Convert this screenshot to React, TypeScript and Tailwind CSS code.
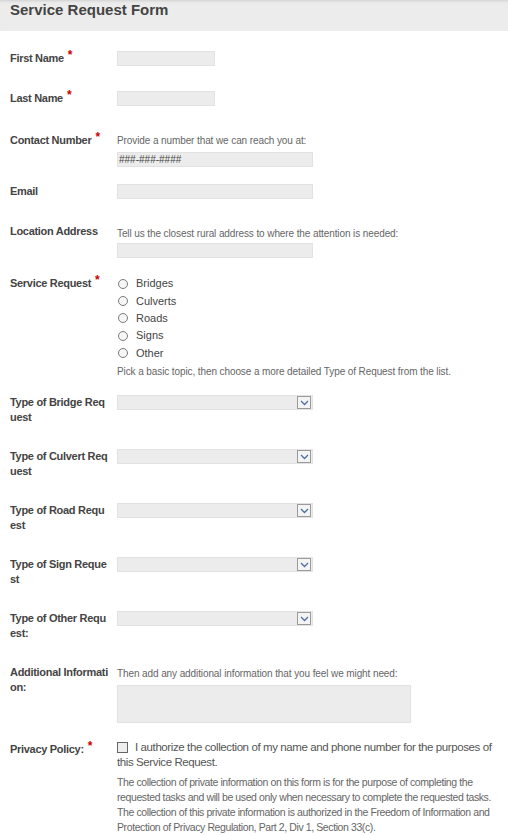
import React from 'react';

const font = { fontFamily: '"Liberation Sans", Arial, sans-serif' };

function Req() {
  return <span className="relative -top-[3px] ml-[4px] text-[12px] text-[#cc0000]">*</span>;
}

function Label({ children, className = '' }: { children: React.ReactNode; className?: string }) {
  return (
    <div className={`w-[107px] shrink-0 text-[11px] font-bold leading-[15px] tracking-[-0.3px] text-[#444] ${className}`}>
      {children}
    </div>
  );
}

function Box({ w = 'w-[98px]' }: { w?: string }) {
  return <div className={`${w} h-[15px] bg-[#ececec] border border-[#e2e2e2]`} />;
}

function Help({ children, className = '' }: { children: React.ReactNode; className?: string }) {
  return <div className={`text-[10px] leading-[13px] tracking-[-0.1px] text-[#666] ${className}`}>{children}</div>;
}

function Select() {
  return (
    <div className="w-[196px] h-[15px] bg-[#ececec] border border-[#e2e2e2] flex justify-end items-center pr-[1px]">
      <div className="w-[14px] h-[13px] border border-[#9a9a9a] bg-[#f4f4f4] flex items-center justify-center">
        <svg width="9" height="6" viewBox="0 0 9 6">
          <path d="M1 1l3.5 3.5L8 1" fill="none" stroke="#4a6fa5" strokeWidth="1.3" />
        </svg>
      </div>
    </div>
  );
}

const topics = ['Bridges', 'Culverts', 'Roads', 'Signs', 'Other'];

const selects = [
  ['Type of Bridge Req', 'uest'],
  ['Type of Culvert Req', 'uest'],
  ['Type of Road Requ', 'est'],
  ['Type of Sign Reque', 'st'],
  ['Type of Other Requ', 'est:'],
];

export default function App() {
  return (
    <div className="w-[508px] min-h-[835px] bg-white" style={font}>
      {/* Header */}
      <div className="h-[31px] bg-[#ececec] shadow-[inset_0_3px_3px_-2px_rgba(0,0,0,0.12)] px-[10px] pt-[1px]">
        <h1 className="text-[15px] font-bold leading-[18px] text-[#444]">Service Request Form</h1>
      </div>

      <div className="px-[10px]">
        {/* First / Last name */}
        <div className="flex items-center mt-[20px]">
          <Label>First Name<Req /></Label>
          <Box />
        </div>
        <div className="flex items-center mt-[25px]">
          <Label>Last Name<Req /></Label>
          <Box />
        </div>

        {/* Contact number */}
        <div className="flex items-start mt-[27px]">
          <Label>Contact Number<Req /></Label>
          <div>
            <Help className="pt-[1px]">Provide a number that we can reach you at:</Help>
            <div className="mt-[5px] w-[196px] h-[15px] bg-[#ececec] border border-[#e2e2e2] text-[10px] leading-[13px] text-[#444] pl-[1px]">
              ###-###-####
            </div>
          </div>
        </div>

        {/* Email */}
        <div className="flex items-center mt-[17px]">
          <Label>Email</Label>
          <Box w="w-[196px]" />
        </div>

        {/* Location */}
        <div className="flex items-start mt-[25px]">
          <Label>Location Address</Label>
          <div>
            <Help className="pt-[3px]">Tell us the closest rural address to where the attention is needed:</Help>
            <div className="mt-[3px] w-[196px] h-[15px] bg-[#ececec] border border-[#e2e2e2]" />
          </div>
        </div>

        {/* Service request */}
        <div className="flex items-start mt-[17px]">
          <Label className="pt-[1px]">Service Request<Req /></Label>
          <div>
            {topics.map((t) => (
              <label key={t} className="flex items-center h-[17.3px] text-[11px] text-[#444]">
                <span className="w-[10px] h-[10px] rounded-full border border-[#7a7a7a] bg-[#f6f6f6] ml-[1px] mr-[8px]" />
                {t}
              </label>
            ))}
            <Help className="mt-[4px]">Pick a basic topic, then choose a more detailed Type of Request from the list.</Help>
          </div>
        </div>

        {/* Type selects */}
        {selects.map(([a, b], i) => (
          <div key={a} className={`flex items-start ${i === 0 ? 'mt-[17px]' : 'mt-[24px]'}`}>
            <Label>
              {a}
              <br />
              {b}
            </Label>
            <Select />
          </div>
        ))}

        {/* Additional info */}
        <div className="flex items-start mt-[24px]">
          <Label>
            Additional Informati
            <br />
            on:
          </Label>
          <div>
            <Help className="pt-[2px]">Then add any additional information that you feel we might need:</Help>
            <div className="mt-[5px] w-[294px] h-[38px] bg-[#ececec] border border-[#e2e2e2]" />
          </div>
        </div>

        {/* Privacy */}
        <div className="flex items-start mt-[16px]">
          <Label className="pt-[3px]">Privacy Policy:<Req /></Label>
          <div className="w-[385px] pt-[1px]">
            <div className="text-[11.5px] leading-[15px] tracking-[-0.4px] text-[#555]">
              <span className="inline-block align-[-2px] w-[11px] h-[11px] border border-[#666] bg-[#eee] mr-[7px]" />
              I authorize the collection of my name and phone number for the purposes of this Service Request.
            </div>
            <div className="mt-[5px] text-[10.5px] leading-[14.7px] tracking-[-0.4px] text-[#666]">
              The collection of private information on this form is for the purpose of completing the requested tasks
              and will be used only when necessary to complete the requested tasks. The collection of this private
              information is authorized in the Freedom of Information and Protection of Privacy Regulation, Part 2, Div
              1, Section 33(c).
            </div>
          </div>
        </div>
      </div>
    </div>
  );
}
